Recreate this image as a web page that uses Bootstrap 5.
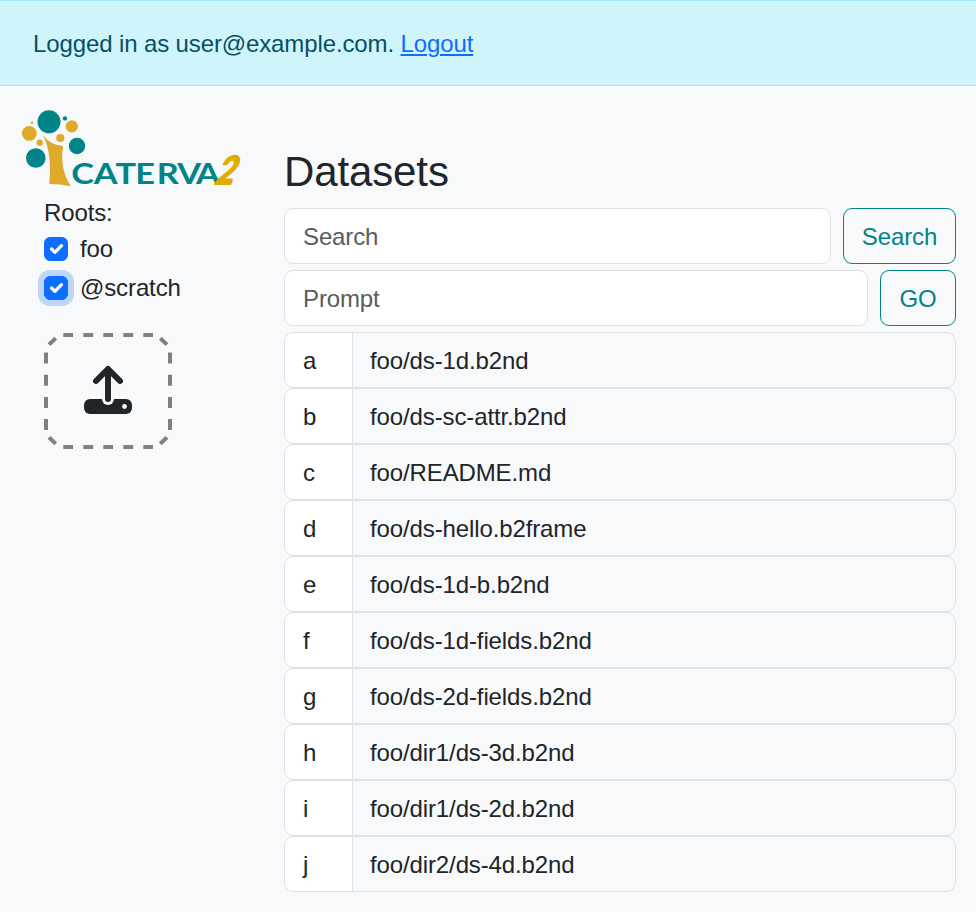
<!DOCTYPE html>
<html lang="en">
<head>
<meta charset="utf-8">
<title>Caterva2</title>
<meta name="viewport" content="width=device-width, initial-scale=1">
<link href="https://cdn.jsdelivr.net/npm/bootstrap@5.3.0/dist/css/bootstrap.min.css" rel="stylesheet">
<style>
html { font-size: 24px; }
body { font-family: "Liberation Sans", Arial, sans-serif; letter-spacing: -.12px; }
.login-bar { padding: 25px 24px 23px 33px; border-left: 0; border-right: 0; color: #055160; }
.login-bar a { text-decoration-thickness: 2px; text-underline-offset: 2px; }
.page-grid { padding: 20px; gap: 20px; }
.side-col { width: 244px; flex: none; }
.brand-logo { width: 224px; height: 86px; display: block; overflow: visible; }
.roots { padding: 3px 0 0 24px; }
.page-title { font-size: 42px; margin-top: 41px; margin-bottom: 11px; }
.form-control, .btn, .input-group-text { padding-top: 10px; padding-bottom: 8px; letter-spacing: inherit; }
.btn-teal { width: 113px; padding-left: 0; padding-right: 0; flex: none; --bs-btn-color: #008488; --bs-btn-border-color: #008488; --bs-btn-hover-bg: #008488; --bs-btn-hover-color: #fff; --bs-btn-hover-border-color: #008488; }
.btn-go { width: 76px; }
.form-control::placeholder { color: #595c5f; }
.upload-box { width: 128px; height: 116px; margin-top: 27px; display: block; }
.row-key { width: 69px; }
.row-path { padding-left: 17px; }
.root-focus { box-shadow: 0 0 0 .25rem rgba(13, 110, 253, .25); }
</style>
<script src="https://cdn.jsdelivr.net/npm/bootstrap@5.3.0/dist/js/bootstrap.bundle.min.js"></script>
</head>
<body class="bg-light">
<div class="alert alert-info rounded-0 mb-0 login-bar" role="alert">Logged in as user@example.com. <a href="#">Logout</a></div>
<div class="d-flex page-grid">
  <aside class="side-col">
    <svg class="brand-logo" viewBox="20 106 224 86" role="img" aria-label="Caterva2">
      <g fill="#008488">
        <circle cx="49" cy="121.8" r="11.5"/><circle cx="65" cy="118.4" r="2.2"/>
        <circle cx="77" cy="146" r="8.2"/><circle cx="35.8" cy="158" r="9.8"/>
      </g>
      <g fill="#dfaa2a">
        <circle cx="71.8" cy="126.4" r="6.1"/><circle cx="60.3" cy="138" r="4.1"/>
        <circle cx="29.3" cy="133.4" r="7.4"/><circle cx="32" cy="122.7" r="1.3"/>
        <circle cx="39.7" cy="142.7" r="3.1"/>
        <path d="M42.700 135Q51 145.500 63.300 146C60.500 160 63 174 70.900 186.200Q60 184 49.200 184C51 166 50 148 42.700 135Z"/>
      </g>
      <text transform="scale(1.2 1)" y="183.700" x="59.300 78.100 96.200 112.700 130.600 147.700 163.300" font-family="Lato, sans-serif" font-weight="700" font-size="28.600" letter-spacing="0" fill="#008488">CATERVA</text>
      <text transform="translate(214 183.700) skewX(-22)" font-family="Lato, sans-serif" font-weight="700" font-size="38.500" textLength="18" lengthAdjust="spacingAndGlyphs" fill="#e0ac00" stroke="#e0ac00" stroke-width="2" stroke-linejoin="round">2</text>
    </svg>
    <div class="roots">
      <div>Roots:</div>
      <div class="form-check">
        <input class="form-check-input" type="checkbox" id="root-foo" checked>
        <label class="form-check-label" for="root-foo">foo</label>
      </div>
      <div class="form-check">
        <input class="form-check-input root-focus" type="checkbox" id="root-scratch" checked>
        <label class="form-check-label" for="root-scratch">@scratch</label>
      </div>
      <svg class="upload-box" viewBox="0 0 128 116" fill="none" role="img" aria-label="Upload">
        <g stroke="gray" stroke-width="4">
          <path d="M19.300 2H109M19.300 114H109" stroke-dasharray="9.800 10.200"/>
          <path d="M2 19.500V97M126 19.500V97" stroke-dasharray="11 11.200"/>
          <path d="M5 11.600L11.700 5.200M116.300 5.200L123 11.600M5 104.400L11.700 110.800M116.300 110.800L123 104.400"/>
        </g>
        <g transform="translate(40 33)" stroke-linecap="round" stroke-linejoin="round">
          <rect y="33" width="48" height="15" rx="6" fill="#212529"/>
          <circle cx="40.500" cy="40.500" r="2.400" fill="#f8f9fa"/>
          <path d="M24 30V33" stroke="#f8f9fa" stroke-width="12"/>
          <path d="M24 3V33M12 15L24 3L36 15" stroke="#212529" stroke-width="6"/>
        </g>
      </svg>
    </div>
  </aside>
  <main class="flex-grow-1">
    <h3 class="page-title">Datasets</h3>
    <form class="d-flex gap-2 mb-1"><input class="form-control" placeholder="Search"><button type="button" class="btn btn-teal">Search</button></form>
    <form class="d-flex gap-2 mb-1"><input class="form-control" placeholder="Prompt"><button type="button" class="btn btn-teal btn-go">GO</button></form>
    <div class="input-group"><span class="input-group-text bg-white row-key">a</span><a class="form-control bg-light text-decoration-none row-path" href="#">foo/ds-1d.b2nd</a></div>
    <div class="input-group"><span class="input-group-text bg-white row-key">b</span><a class="form-control bg-light text-decoration-none row-path" href="#">foo/ds-sc-attr.b2nd</a></div>
    <div class="input-group"><span class="input-group-text bg-white row-key">c</span><a class="form-control bg-light text-decoration-none row-path" href="#">foo/README.md</a></div>
    <div class="input-group"><span class="input-group-text bg-white row-key">d</span><a class="form-control bg-light text-decoration-none row-path" href="#">foo/ds-hello.b2frame</a></div>
    <div class="input-group"><span class="input-group-text bg-white row-key">e</span><a class="form-control bg-light text-decoration-none row-path" href="#">foo/ds-1d-b.b2nd</a></div>
    <div class="input-group"><span class="input-group-text bg-white row-key">f</span><a class="form-control bg-light text-decoration-none row-path" href="#">foo/ds-1d-fields.b2nd</a></div>
    <div class="input-group"><span class="input-group-text bg-white row-key">g</span><a class="form-control bg-light text-decoration-none row-path" href="#">foo/ds-2d-fields.b2nd</a></div>
    <div class="input-group"><span class="input-group-text bg-white row-key">h</span><a class="form-control bg-light text-decoration-none row-path" href="#">foo/dir1/ds-3d.b2nd</a></div>
    <div class="input-group"><span class="input-group-text bg-white row-key">i</span><a class="form-control bg-light text-decoration-none row-path" href="#">foo/dir1/ds-2d.b2nd</a></div>
    <div class="input-group"><span class="input-group-text bg-white row-key">j</span><a class="form-control bg-light text-decoration-none row-path" href="#">foo/dir2/ds-4d.b2nd</a></div>
  </main>
</div>
</body>
</html>
